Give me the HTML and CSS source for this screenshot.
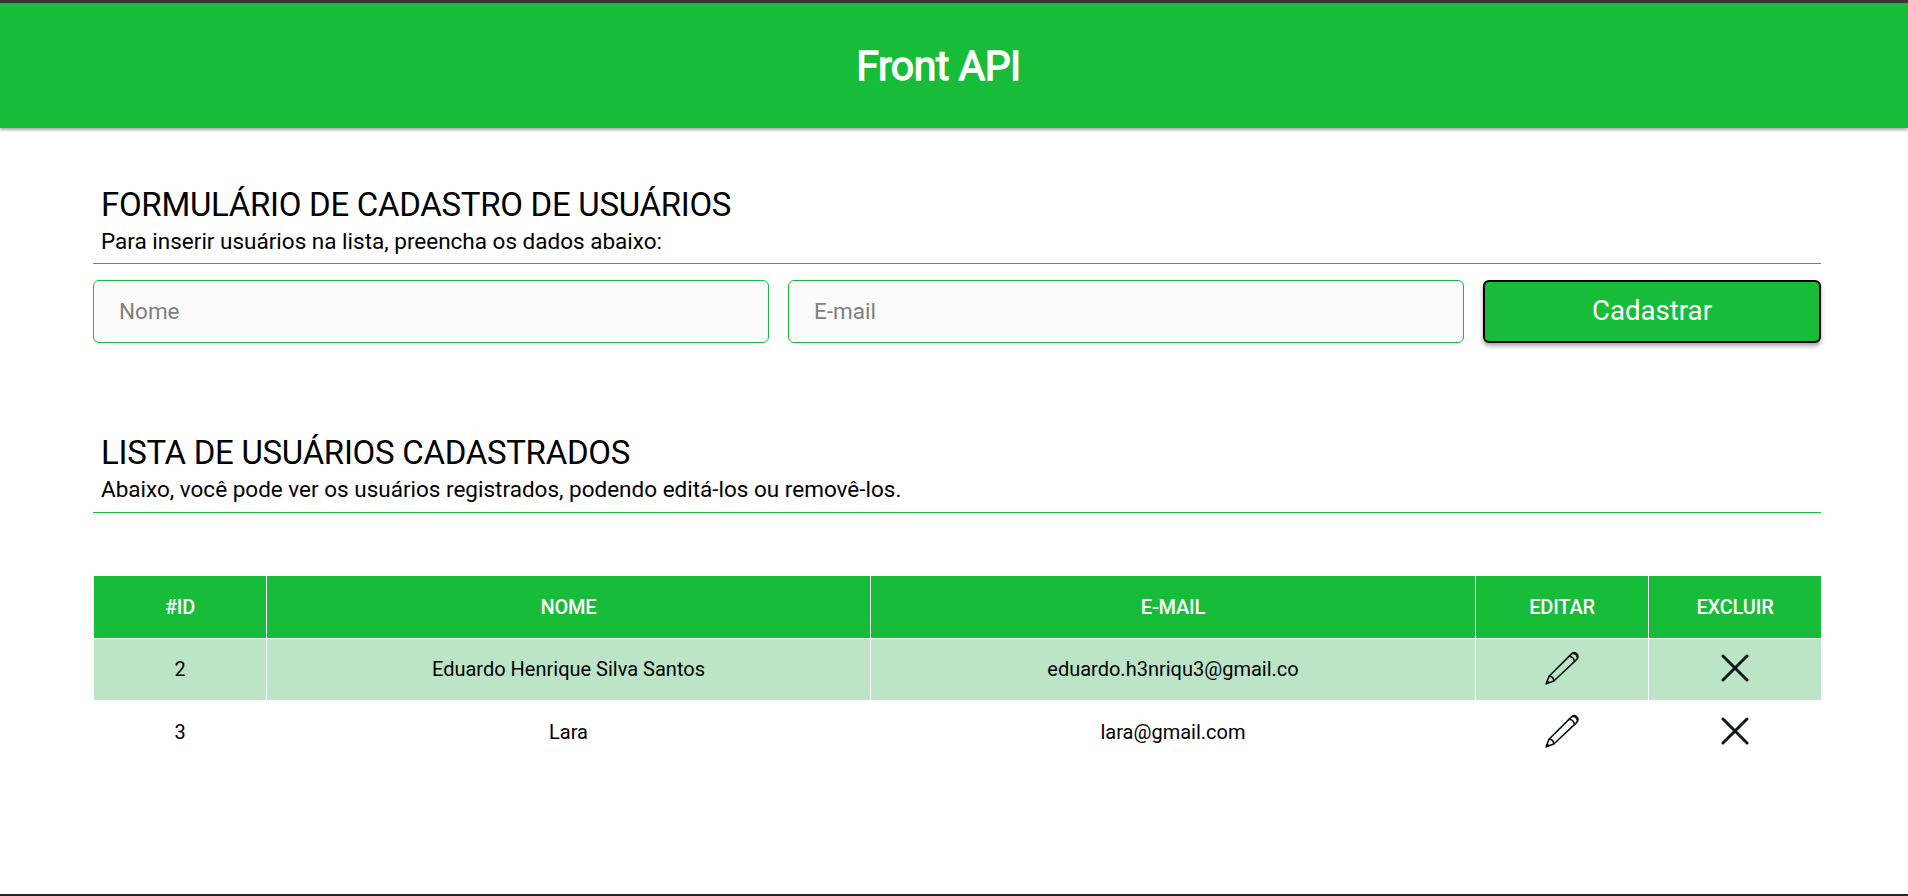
FILE: index.html
```html
<!DOCTYPE html>
<html lang="pt-BR">
<head>
<meta charset="utf-8">
<title>Front API</title>
<link rel="stylesheet" href="styles.css">
</head>
<body>
<svg class="sprite" aria-hidden="true">
  <symbol id="pencil" viewBox="0 0 34 34">
    <g fill="none" stroke="#0c120e" stroke-width="1.6" stroke-linejoin="round" stroke-linecap="round">
      <path d="M1.2 32.8 4 25.3 25.8 3.6C29.5-.6 35.2 3.4 31.8 8.3L8.8 30Z"/>
      <path d="M4 25.3c2.8 0 4.6 2 4.8 4.7M24.2 5.2c2.5.2 4.9 2.5 5.3 5.2M27.8 2.2c2.2.3 4.5 2.6 4.8 5.2"/>
    </g>
    <path fill="#0c120e" d="M.6 33.4 2.2 29 5 31.8Z"/>
  </symbol>
  <symbol id="cross" viewBox="0 0 28 28">
    <path d="M2 2 26 26M26 2 2 26" fill="none" stroke="#111713" stroke-width="3" stroke-linecap="round"/>
  </symbol>
</svg>
<header class="header"><h1 class="brand">Front API</h1></header>
<main class="main">
  <section class="section form-section">
    <div class="heading">
      <h2 class="title">FORMULÁRIO DE CADASTRO DE USUÁRIOS</h2>
      <p class="subtitle">Para inserir usuários na lista, preencha os dados abaixo:</p>
    </div>
    <form class="form">
      <input class="field" type="text" placeholder="Nome">
      <input class="field" type="text" placeholder="E-mail">
      <button class="submit" type="button">Cadastrar</button>
    </form>
  </section>
  <section class="section list-section">
    <div class="heading">
      <h2 class="title">LISTA DE USUÁRIOS CADASTRADOS</h2>
      <p class="subtitle">Abaixo, você pode ver os usuários registrados, podendo editá-los ou removê-los.</p>
    </div>
    <table class="users">
      <colgroup><col class="col-small"><col class="col-name"><col class="col-mail"><col class="col-small"><col class="col-small"></colgroup>
      <thead>
        <tr><th>#ID</th><th>NOME</th><th>E-MAIL</th><th>EDITAR</th><th>EXCLUIR</th></tr>
      </thead>
      <tbody>
        <tr class="striped"><td>2</td><td>Eduardo Henrique Silva Santos</td><td>eduardo.h3nriqu3@gmail.co</td><td><svg class="pencil"><use href="#pencil"/></svg></td><td><svg class="cross"><use href="#cross"/></svg></td></tr>
        <tr><td>3</td><td>Lara</td><td>lara@gmail.com</td><td><svg class="pencil"><use href="#pencil"/></svg></td><td><svg class="cross"><use href="#cross"/></svg></td></tr>
      </tbody>
    </table>
  </section>
</main>
</body>
</html>
```
FILE: styles.css
```css
* { box-sizing: border-box; margin: 0; padding: 0; }
body {
  height: 896px;
  overflow: hidden;
  font-family: Roboto, sans-serif;
  color: #000;
  background: #fff;
  border-top: 3px solid #383338;
  border-bottom: 2px solid #292433;
}
.sprite { display: none; }
.header {
  height: 125px;
  padding-right: 31px;
  display: flex;
  align-items: center;
  justify-content: center;
  background: #17bd39;
  box-shadow: 0 2px 3px rgba(0, 0, 0, .35);
}
.brand {
  padding-top: 1px;
  font-size: 41px;
  line-height: 48px;
  font-weight: 400;
  letter-spacing: -.5px;
  color: #fff;
  -webkit-text-stroke: 1.3px #fff;
}
.main { width: 1728px; margin-left: 93px; padding-top: 57px; }
.form-section { margin-bottom: 90px; }
.heading { padding: 0 8px 6px; border-bottom: 1px solid #17bd39; }
.list-section .heading { padding-bottom: 7px; }
.title { font-size: 33px; line-height: 40px; font-weight: 400; letter-spacing: -.29px; }
.subtitle { font-size: 22.5px; line-height: 32px; }
.form {
  display: grid;
  grid-template-columns: 2fr 2fr 1fr;
  gap: 19px;
  margin-top: 16px;
}
.field {
  height: 63px;
  min-width: 0;
  padding: 0 25px 1px;
  border: 1px solid #17bd39;
  border-radius: 6px;
  background: #fbfbfb;
  font: 400 22.5px Roboto, sans-serif;
}
.field::placeholder { color: #808080; }
.submit {
  height: 63px;
  padding-bottom: 2px;
  border: 2px solid #000;
  border-radius: 6px;
  background: #17bd39;
  box-shadow: 0 3px 4px rgba(0, 0, 0, .35);
  color: #fff;
  font: 400 27.6px Roboto, sans-serif;
}
.users {
  width: 1728px;
  margin-top: 62px;
  table-layout: fixed;
  border-collapse: separate;
  border-spacing: 0;
  font-size: 20px;
  text-align: center;
}
.col-small { width: 173px; }
.col-name { width: 604px; }
.col-mail { width: 605px; }
.users th, .users td {
  height: 63px;
  border-top: 1px solid #fff;
  border-left: 1px solid #fff;
  vertical-align: middle;
}
.users th { background: #17bd39; color: #fff; font-weight: 500; letter-spacing: -.2px; }
.users .striped td { height: 62px; padding-bottom: 1px; background: #bce4c7; }
.pencil, .cross { display: block; margin: 0 auto 3px; }
.pencil { width: 34px; height: 34px; }
.cross { width: 28px; height: 28px; }
```
